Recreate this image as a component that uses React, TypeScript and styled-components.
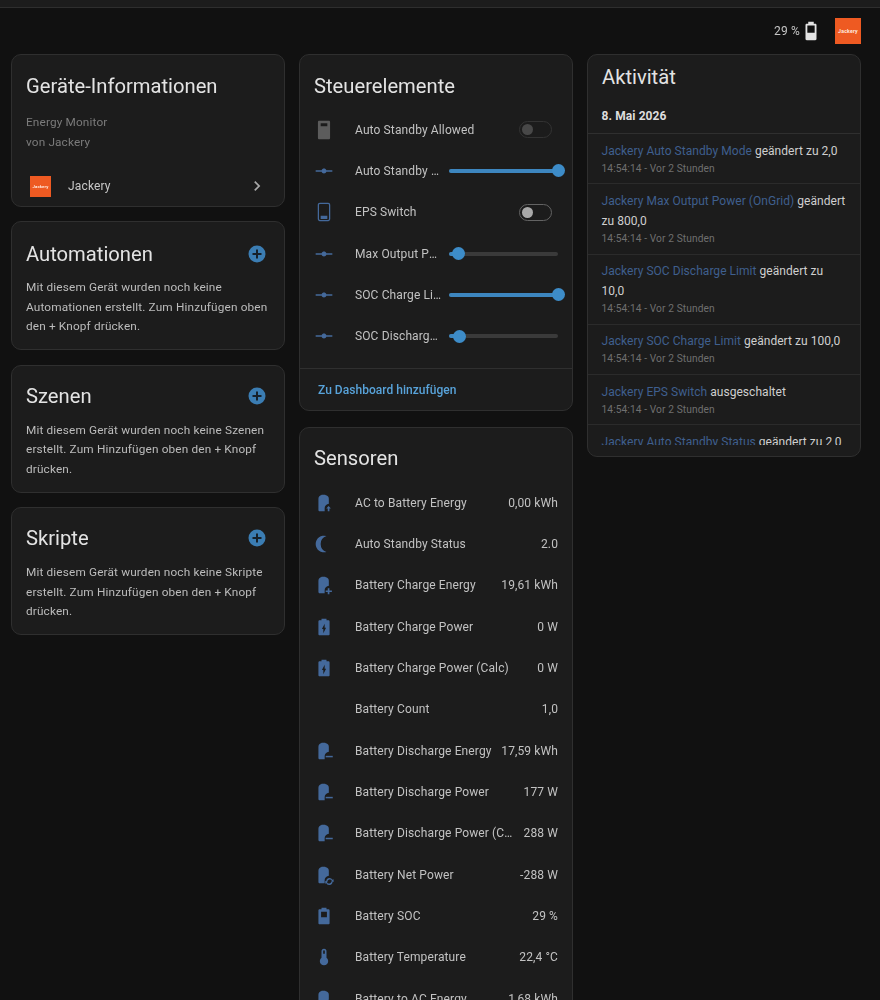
import * as React from 'react';
import styled, { createGlobalStyle } from 'styled-components';

const GlobalStyle = createGlobalStyle`
  html, body {
    margin: 0;
    height: 1000px;
    overflow: hidden;
    background: #111111;
    font-family: Roboto, "Liberation Sans", sans-serif;
    -webkit-font-smoothing: antialiased;
  }

  #root {
    filter: blur(0.35px);
  }
`;

const TopBar = styled.div`
  height: 7px;
  background: #1c1c1c;
  border-bottom: 1px solid #2e2e2e;
`;

const StatusBar = styled.div`
  height: 46px;
  display: flex;
  align-items: center;
  justify-content: flex-end;
  padding-right: 19px;
  color: #c4c4c4;
  font-size: 12px;
  letter-spacing: 0.2px;
`;

const StatusIcon = styled.svg`
  width: 22px;
  height: 22px;
  margin: 0 13px 0 0;
  fill: #e4e4e4;
`;

const Logo = styled.div<{ $size: number }>`
  width: ${p => p.$size}px;
  height: ${p => p.$size}px;
  background: #ee5a22;
  color: #ffe9df;
  display: flex;
  align-items: center;
  justify-content: center;
  font-size: ${p => p.$size * 0.2}px;
  font-weight: 700;
  flex: none;
`;

const Columns = styled.div`
  display: grid;
  grid-template-columns: repeat(3, 274px);
  gap: 14px;
  padding: 0 11px;
  align-items: start;
`;

const Column = styled.div`
  display: flex;
  flex-direction: column;
  gap: 14.5px;
`;

const Card = styled.section`
  background: #1c1c1c;
  border: 1px solid #2f2f2f;
  border-radius: 10px;
  box-sizing: border-box;
  overflow: hidden;
`;

const CardTitle = styled.h2<{ $height: number; $pad: number }>`
  margin: 0;
  box-sizing: border-box;
  padding: ${p => p.$pad}px 14px 0;
  height: ${p => p.$height}px;
  display: flex;
  align-items: center;
  justify-content: space-between;
  font-size: 20.2px;
  font-weight: 400;
  color: #e3e3e3;
`;

const PlusButton = styled.svg`
  width: 20px;
  height: 20px;
  margin-right: 3px;
`;

const Muted = styled.div`
  padding: 0 14px;
  color: #7b7b7b;
  font-size: 11.8px;
  line-height: 19.5px;
  letter-spacing: 0.15px;
`;

const DeviceLink = styled.div`
  display: flex;
  align-items: center;
  height: 39px;
  margin-top: 14.5px;
  padding: 0 20px 0 18px;
  color: #c8c8c8;
  font-size: 12px;
  letter-spacing: 0.15px;
`;

const DeviceName = styled.span`
  margin-left: 17px;
  flex: 1;
`;

const Chevron = styled.svg`
  width: 20px;
  height: 20px;
  fill: #a8a8a8;
  margin-right: -3px;
`;

const EmptyText = styled.p`
  margin: 0;
  padding: 0 14px 12.5px;
  color: #bcbcbc;
  font-size: 11.8px;
  line-height: 19.5px;
  letter-spacing: 0.15px;
`;

const Rows = styled.div<{ $bottom: number }>`
  padding-bottom: ${p => p.$bottom}px;
`;

const Row = styled.div`
  height: 41.33px;
  display: flex;
  align-items: center;
  padding: 0 14px;
  color: #c2c2c2;
  font-size: 12px;
  letter-spacing: 0.12px;
`;

const RowIcon = styled.svg<{ $muted?: boolean }>`
  width: 20px;
  height: 20px;
  flex: none;
  fill: ${p => (p.$muted ? '#5c5c5c' : '#44699b')};
  margin-right: 21px;
`;

const RowSpacer = styled.div`
  width: 20px;
  flex: none;
  margin-right: 21px;
`;

const RowLabel = styled.span`
  flex: 1;
  min-width: 0;
  white-space: nowrap;
  overflow: hidden;
  text-overflow: ellipsis;
`;

const RowValue = styled.span`
  margin-left: 8px;
  white-space: nowrap;
`;

const Switch = styled.div<{ $disabled?: boolean }>`
  width: 33px;
  height: 17px;
  box-sizing: border-box;
  border-radius: 9px;
  margin-right: 6px;
  margin-left: 6px;
  border: 1.5px solid ${p => (p.$disabled ? '#333333' : '#636363')};
  display: flex;
  align-items: center;
  padding-left: 2px;

  &::before {
    content: '';
    width: 11px;
    height: 11px;
    border-radius: 50%;
    background: ${p => (p.$disabled ? '#484848' : '#a9a9a9')};
  }
`;

const Slider = styled.div`
  position: relative;
  width: 109px;
  height: 4px;
  flex: none;
  margin-left: 6px;
  border-radius: 2px;
  background: #3a3a3a;
`;

const SliderFill = styled.div`
  height: 100%;
  border-radius: 2px;
  background: #3d86bf;
`;

const SliderThumb = styled.div`
  position: absolute;
  top: -4.5px;
  width: 13px;
  height: 13px;
  margin-left: -6.5px;
  border-radius: 50%;
  background: #3d8cc8;
`;

const CardFooter = styled.div`
  border-top: 1px solid #2f2f2f;
  height: 41px;
  display: flex;
  align-items: center;
  padding-left: 18px;
  color: #58a3da;
  font-size: 12px;
  font-weight: 500;
  letter-spacing: 0.03px;
`;

const SensorCard = styled(Card)`
  margin-top: 1px;
`;

const ActivityDate = styled.div`
  height: 35px;
  padding: 0 13.5px;
  display: flex;
  align-items: center;
  color: #dedede;
  font-size: 12px;
  font-weight: 700;
  letter-spacing: 0.1px;
  border-bottom: 1px solid #2f2f2f;
`;

const ActivityList = styled.div`
  height: 311px;
  overflow: hidden;
  margin-bottom: 11px;
`;

const ActivityEntry = styled.div`
  padding: 6.5px 12.5px 6.3px 13.5px;
  border-bottom: 1px solid #2b2b2b;
`;

const EntryText = styled.div`
  color: #cfcfcf;
  font-size: 12px;
  line-height: 20px;
  letter-spacing: 0.04px;
`;

const EntryName = styled.span`
  color: #3f5f8e;
`;

const EntryTime = styled.div`
  color: #6f6f6f;
  font-size: 10.2px;
  line-height: 16.5px;
  letter-spacing: 0.1px;
`;

const Cut = styled.path`
  fill: #1c1c1c;
`;

const BATTERY = 'M17.3 4H15V2H9v2H6.700C6 4 5.300 4.600 5.300 5.330v15.340C5.300 21.400 6 22 6.700 22h10.600c.7 0 1.400-.6 1.400-1.330V5.330C18.700 4.600 18 4 17.300 4z';
const BATTERY_BITTEN = 'M5.300 20.500V7C5.300 4.500 7 3 9 2.500V2h4.500v.5c2.600.5 4.300 2 4.300 4.500v6c-2.800.5-5 2.300-5 5V22H6.800C6 22 5.300 21.300 5.300 20.500z';

const paths: Record<string, React.ReactNode> = {
  vertex: <path d="M2 11H9.17C9.58 9.83 10.69 9 12 9S14.42 9.83 14.83 11H22V13H14.83C14.42 14.17 13.31 15 12 15S9.58 14.17 9.17 13H2V11Z" />,
  device: <path fillRule="evenodd" d="M6.300 1h11.400c.9 0 1.600.7 1.600 1.500v19c0 .8-.7 1.500-1.600 1.500H6.300c-.9 0-1.600-.7-1.600-1.500v-19C4.700 1.700 5.400 1 6.300 1zM8 4v3.500h8V4H8z" />,
  eps: <path fillRule="evenodd" d="M7 1h10c1.400 0 2.500 1.100 2.500 2.500v17c0 1.400-1.100 2.500-2.500 2.500H7C5.600 23 4.500 21.900 4.500 20.500v-17C4.500 2.100 5.600 1 7 1zm0 1.500c-.5 0-1 .5-1 1v17c0 .5.500 1 1 1h10c.5 0 1-.5 1-1v-17c0-.5-.5-1-1-1H7zM8 16.500h8V20.500H8v-4z" />,
  moon: <path d="M2 12A10 10 0 0 0 15 21.54A10 10 0 0 1 15 2.46A10 10 0 0 0 2 12Z" />,
  bolt: (
    <>
      <path d={BATTERY} />
      <Cut d="M11.200 19.500v-5.200H9.500L12.800 8v4.800h1.700l-3.300 6.700z" />
    </>
  ),
  soc: (
    <>
      <path d={BATTERY} />
      <Cut d="M8.500 7h7v6.500h-7z" />
    </>
  ),
  thermo: <path d="M15 13V5A3 3 0 0 0 9 5V13A5 5 0 1 0 15 13M12 4A1 1 0 0 1 13 5V8H11V5A1 1 0 0 1 12 4Z" />,
  up: (
    <>
      <path d={BATTERY_BITTEN} />
      <path d="M17.500 15.500l2.800 3h-1.800v3.500h-2v-3.500h-1.800l2.800-3z" />
    </>
  ),
  plus: (
    <>
      <path d={BATTERY_BITTEN} />
      <path d="M16.500 16H18.500v2.500H21.500v1.800H18.500v2.700H16.500v-2.700H14v-1.800h2.500z" />
    </>
  ),
  minus: (
    <>
      <path d={BATTERY_BITTEN} />
      <path d="M14 17.800h8.500v1.800H14z" />
    </>
  ),
  sync: (
    <>
      <path d={BATTERY_BITTEN} />
      <path transform="translate(.5 1)" d="M18 14.500a4.200 4.200 0 0 1 3.700 2.200l1.300-.7v3.500l-3-1.200 1-.6a3 3 0 0 0-5.500 1H14.200A4.200 4.200 0 0 1 18 14.500zM18 23a4.200 4.200 0 0 1-3.700-2.200l-1.300.7V18l3 1.200-1 .6a3 3 0 0 0 5.500-1h1.300A4.200 4.200 0 0 1 18 23z" />
    </>
  ),
};

function Icon({ name, muted }: { name: string; muted?: boolean }) {
  return (
    <RowIcon viewBox="0 0 24 24" $muted={muted}>
      {paths[name]}
    </RowIcon>
  );
}

function Plus() {
  return (
    <PlusButton viewBox="0 0 20 20">
      <circle cx="10" cy="10" r="8.500" fill="#3b7db3" />
      <path d="M9 5.500h2V9h3.500v2H11v3.500H9V11H5.500V9H9z" fill="#16202a" />
    </PlusButton>
  );
}

const controls = [
  { icon: 'device', label: 'Auto Standby Allowed', toggle: 'disabled' },
  { icon: 'vertex', label: 'Auto Standby Mode', value: 100 },
  { icon: 'eps', label: 'EPS Switch', toggle: 'off' },
  { icon: 'vertex', label: 'Max Output Power (OnGrid)', value: 8.3 },
  { icon: 'vertex', label: 'SOC Charge Limit', value: 100 },
  { icon: 'vertex', label: 'SOC Discharge Limit', value: 10 },
];

const sensors = [
  { icon: 'up', label: 'AC to Battery Energy', value: '0,00 kWh' },
  { icon: 'moon', label: 'Auto Standby Status', value: '2.0' },
  { icon: 'plus', label: 'Battery Charge Energy', value: '19,61 kWh' },
  { icon: 'bolt', label: 'Battery Charge Power', value: '0 W' },
  { icon: 'bolt', label: 'Battery Charge Power (Calc)', value: '0 W' },
  { icon: '', label: 'Battery Count', value: '1,0' },
  { icon: 'minus', label: 'Battery Discharge Energy', value: '17,59 kWh' },
  { icon: 'minus', label: 'Battery Discharge Power', value: '177 W' },
  { icon: 'minus', label: 'Battery Discharge Power (Calc)', value: '288 W' },
  { icon: 'sync', label: 'Battery Net Power', value: '-288 W' },
  { icon: 'soc', label: 'Battery SOC', value: '29 %' },
  { icon: 'thermo', label: 'Battery Temperature', value: '22,4 °C' },
  { icon: 'up', label: 'Battery to AC Energy', value: '1,68 kWh' },
];

const activity = [
  { name: 'Jackery Auto Standby Mode', text: 'geändert zu 2,0' },
  { name: 'Jackery Max Output Power (OnGrid)', text: 'geändert zu 800,0' },
  { name: 'Jackery SOC Discharge Limit', text: 'geändert zu 10,0' },
  { name: 'Jackery SOC Charge Limit', text: 'geändert zu 100,0' },
  { name: 'Jackery EPS Switch', text: 'ausgeschaltet' },
  { name: 'Jackery Auto Standby Status', text: 'geändert zu 2,0' },
];

const emptyCards = [
  { title: 'Automationen', height: 56, pad: 8, text: 'Mit diesem Gerät wurden noch keine Automationen erstellt. Zum Hinzufügen oben den + Knopf drücken.' },
  { title: 'Szenen', height: 55, pad: 5, text: 'Mit diesem Gerät wurden noch keine Szenen erstellt. Zum Hinzufügen oben den + Knopf drücken.' },
  { title: 'Skripte', height: 55, pad: 5, text: 'Mit diesem Gerät wurden noch keine Skripte erstellt. Zum Hinzufügen oben den + Knopf drücken.' },
];

export default function App() {
  return (
    <>
      <GlobalStyle />
      <TopBar />
      <StatusBar>
        29 %
        <StatusIcon viewBox="0 0 24 24">
          <path fillRule="evenodd" d="M16.670 4H15V2H9v2H7.330C6.600 4 6 4.600 6 5.330v15.340C6 21.400 6.600 22 7.330 22h9.340c.730 0 1.330-.600 1.330-1.330V5.330C18 4.600 17.400 4 16.670 4zM8 6h8v8H8V6z" />
        </StatusIcon>
        <Logo $size={26}>Jackery</Logo>
      </StatusBar>
      <Columns>
        <Column>
          <Card>
            <CardTitle $height={58} $pad={4}>Geräte-Informationen</CardTitle>
            <Muted>
              Energy Monitor
              <br />
              von Jackery
            </Muted>
            <DeviceLink>
              <Logo $size={21}>Jackery</Logo>
              <DeviceName>Jackery</DeviceName>
              <Chevron viewBox="0 0 24 24">
                <path d="M8.590 16.580L13.170 12L8.590 7.410L10 6l6 6-6 6-1.410-1.420z" />
              </Chevron>
            </DeviceLink>
          </Card>
          {emptyCards.map(card => (
            <Card key={card.title}>
              <CardTitle $height={card.height} $pad={card.pad}>
                {card.title}
                <Plus />
              </CardTitle>
              <EmptyText>{card.text}</EmptyText>
            </Card>
          ))}
        </Column>
        <Column>
          <Card>
            <CardTitle $height={54} $pad={8}>Steuerelemente</CardTitle>
            <Rows $bottom={11.5}>
              {controls.map(control => (
                <Row key={control.label}>
                  <Icon name={control.icon} muted={control.toggle === 'disabled'} />
                  <RowLabel>{control.label}</RowLabel>
                  {control.toggle ? (
                    <Switch $disabled={control.toggle === 'disabled'} />
                  ) : (
                    <Slider>
                      <SliderFill style={{ width: `${control.value}%` }} />
                      <SliderThumb style={{ left: `${control.value}%` }} />
                    </Slider>
                  )}
                </Row>
              ))}
            </Rows>
            <CardFooter>Zu Dashboard hinzufügen</CardFooter>
          </Card>
          <SensorCard>
            <CardTitle $height={54} $pad={7}>Sensoren</CardTitle>
            <Rows $bottom={10}>
              {sensors.map(sensor => (
                <Row key={sensor.label}>
                  {sensor.icon ? <Icon name={sensor.icon} /> : <RowSpacer />}
                  <RowLabel>{sensor.label}</RowLabel>
                  <RowValue>{sensor.value}</RowValue>
                </Row>
              ))}
            </Rows>
          </SensorCard>
        </Column>
        <Column>
          <Card>
            <CardTitle $height={43} $pad={0}>Aktivität</CardTitle>
            <ActivityDate>8. Mai 2026</ActivityDate>
            <ActivityList>
              {activity.map(entry => (
                <ActivityEntry key={entry.name}>
                  <EntryText>
                    <EntryName>{entry.name}</EntryName> {entry.text}
                  </EntryText>
                  <EntryTime>14:54:14 - Vor 2 Stunden</EntryTime>
                </ActivityEntry>
              ))}
            </ActivityList>
          </Card>
        </Column>
      </Columns>
    </>
  );
}
